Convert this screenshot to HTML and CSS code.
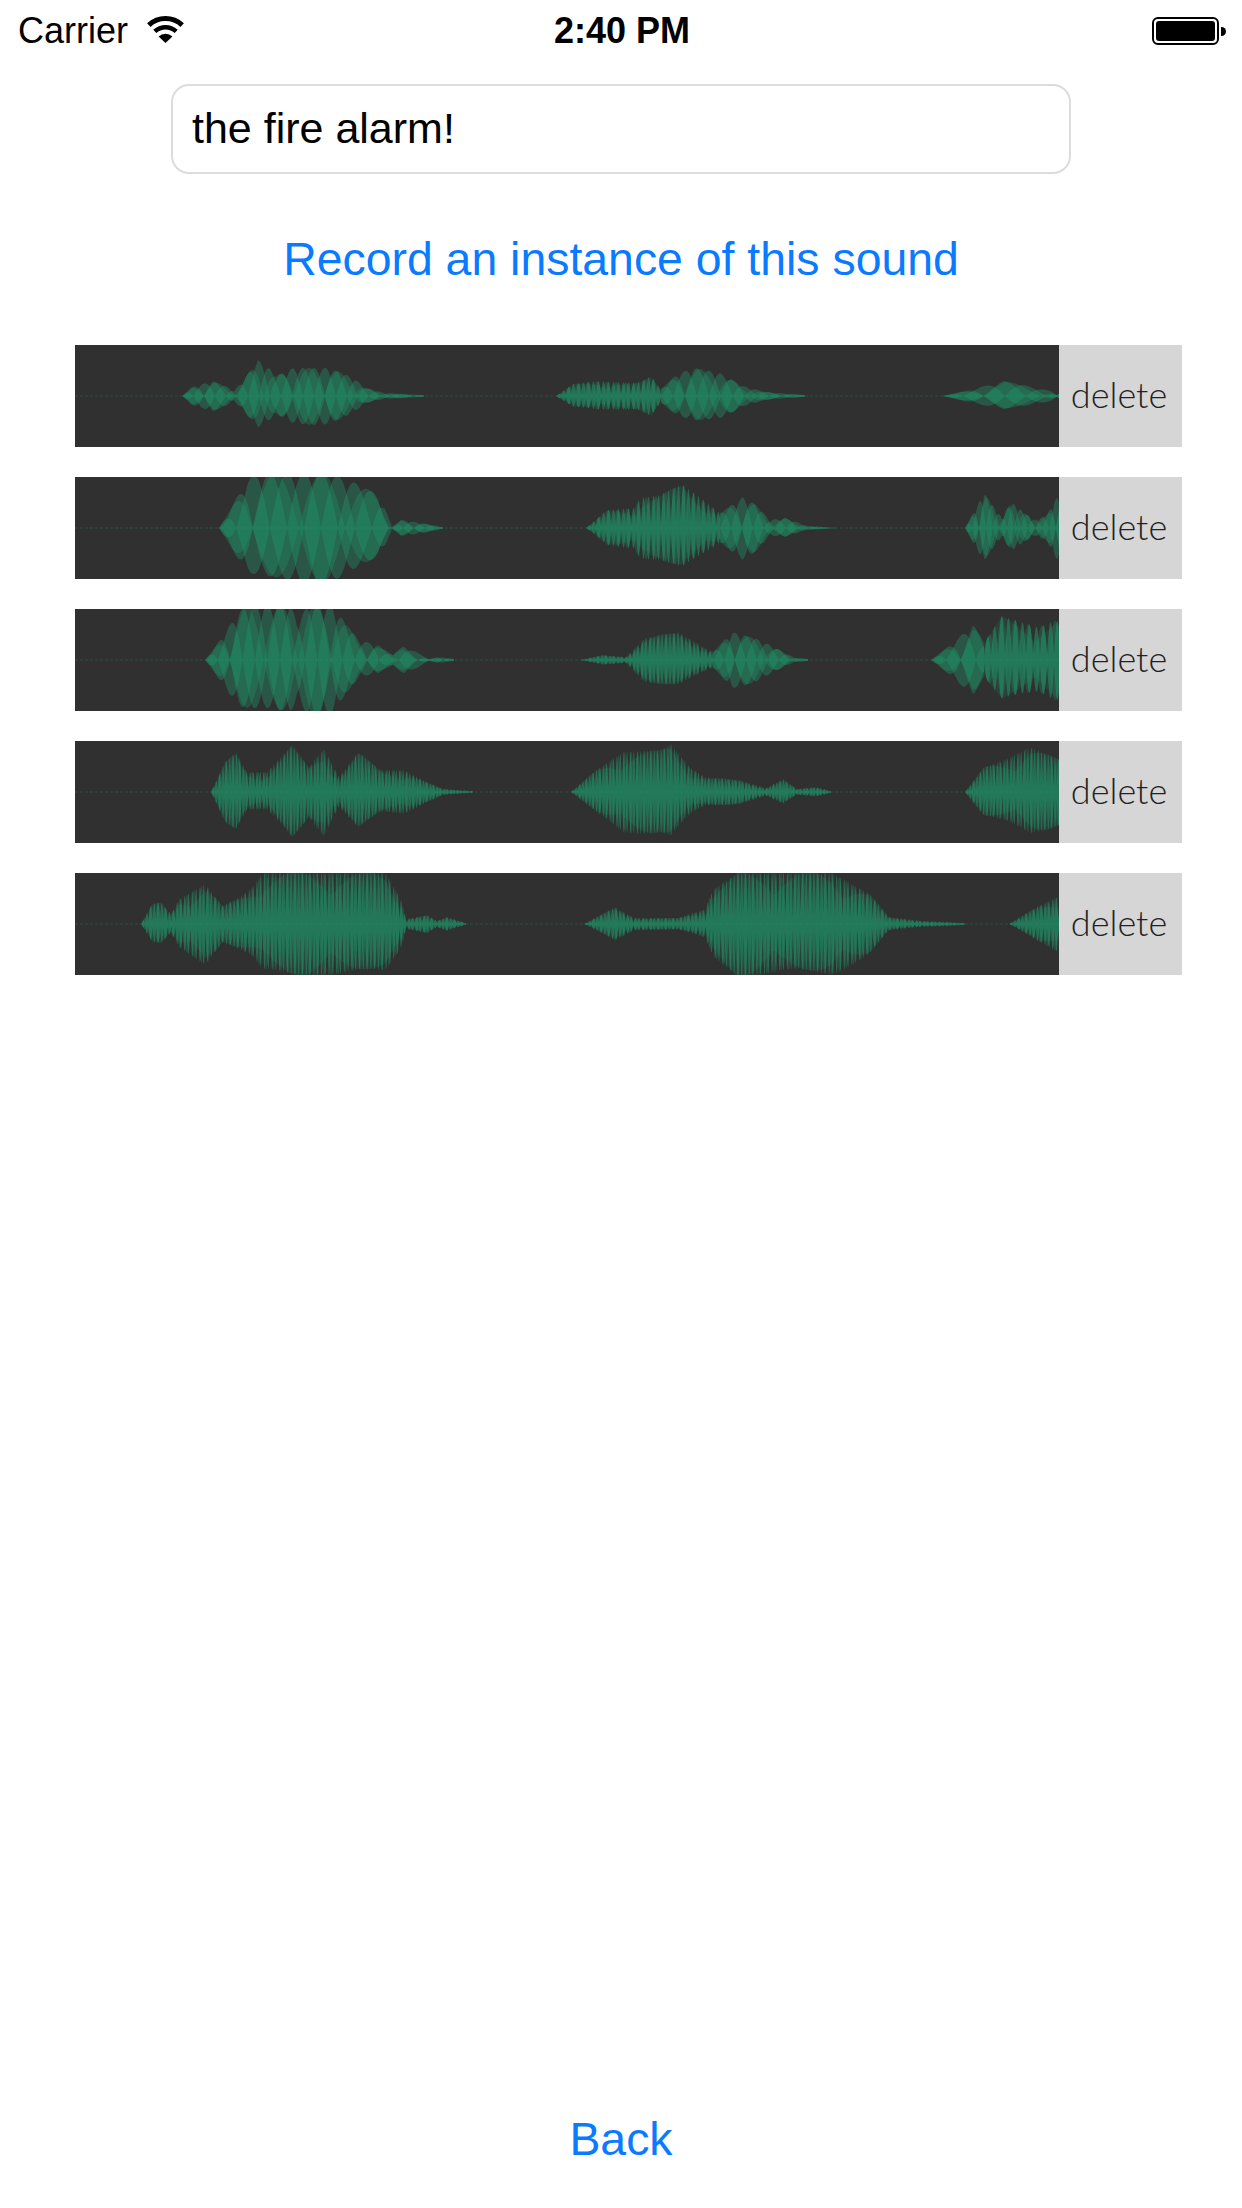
FILE: index.html
```html
<!DOCTYPE html>
<html lang="en">
<head>
    <meta charset="UTF-8">
    <meta name="viewport" content="width=device-width, initial-scale=1.0">
    <title>Sound detail</title>
    <link rel="stylesheet" href="styles.css">
</head>
<body>
    <div class="status-bar">
        <div class="status-left">
            <span>Carrier</span>
            <svg class="wifi" width="40" height="30" viewBox="0 0 40 30">
                <path d="M2.8 10.1A24.5 24.5 0 0 1 36.2 10.1" fill="none" stroke="#000" stroke-width="5"/>
                <path d="M8.8 16.3A16 16 0 0 1 30.2 16.3" fill="none" stroke="#000" stroke-width="4.5"/>
                <path d="M19.5 28L12.6 21.4A10 10 0 0 1 26.4 21.4Z" fill="#000"/>
            </svg>
        </div>
        <div class="status-time">2:40 PM</div>
        <div class="status-right">
            <div class="battery"><div class="battery-fill"></div></div>
            <div class="battery-nub"></div>
        </div>
    </div>

    <div class="name-field">the fire alarm!</div>

    <a class="link record-link">Record an instance of this sound</a>

    <div class="recordings">
        <div class="recording">
            <svg class="wave" data-wave="0" width="984" height="102"></svg>
            <div class="delete">delete</div>
        </div>
        <div class="recording">
            <svg class="wave" data-wave="1" width="984" height="102"></svg>
            <div class="delete">delete</div>
        </div>
        <div class="recording">
            <svg class="wave" data-wave="2" width="984" height="102"></svg>
            <div class="delete">delete</div>
        </div>
        <div class="recording">
            <svg class="wave" data-wave="3" width="984" height="102"></svg>
            <div class="delete">delete</div>
        </div>
        <div class="recording">
            <svg class="wave" data-wave="4" width="984" height="102"></svg>
            <div class="delete">delete</div>
        </div>
    </div>

    <a class="link back-link">Back</a>

    <script src="wave.js"></script>
</body>
</html>
```

FILE: styles.css
```css
html, body {
    height: 100%;
}
body {
    font-family: "Liberation Sans", Arial, sans-serif;
    display: flex;
    flex-direction: column;
    align-items: center;
    height: 2208px;
    margin: 0;
    background: #fff;
    color: #000;
    overflow: hidden;
}
.status-bar {
    display: grid;
    grid-template-columns: 1fr auto 1fr;
    align-items: center;
    width: 100%;
    box-sizing: border-box;
    height: 60px;
    padding: 2px 16px 0 18px;
    font-size: 36px;
}
.status-left {
    display: flex;
    align-items: center;
    gap: 18px;
}
.wifi {
    margin-top: -2px;
}
.status-time {
    font-weight: bold;
}
.status-right {
    display: flex;
    align-items: center;
    justify-content: flex-end;
    gap: 2px;
}
.battery {
    width: 67px;
    height: 28px;
    box-sizing: border-box;
    border: 2px solid #000;
    border-radius: 6px;
    padding: 2px;
}
.battery-fill {
    height: 100%;
    background: #000;
    border-radius: 3px;
}
.battery-nub {
    width: 5px;
    height: 9px;
    background: #000;
    border-radius: 0 5px 5px 0;
}
.name-field {
    width: 900px;
    height: 90px;
    box-sizing: border-box;
    margin-top: 24px;
    padding: 0 19px 2px;
    border: 2px solid #dcdcdc;
    border-radius: 18px;
    display: flex;
    align-items: center;
    font-size: 43px;
}
.link {
    color: #0a7aff;
    font-size: 46.4px;
}
.record-link {
    margin-top: 58px;
}
.recordings {
    display: flex;
    flex-direction: column;
    align-self: flex-start;
    gap: 30px;
    margin: 59px 0 0 75px;
}
.recording {
    display: flex;
    width: 1107px;
    height: 102px;
}
.wave {
    display: block;
    flex: none;
    background: #303030;
}
.delete {
    flex: 1;
    display: flex;
    align-items: center;
    justify-content: center;
    padding: 0 3px 4px 0;
    background: #d6d6d6;
    color: #222;
    font-family: Lato, "Liberation Sans", sans-serif;
    font-weight: 300;
    font-size: 36px;
}
.back-link {
    margin-top: auto;
    margin-bottom: 42px;
}
```

FILE: wave.js
```js
// envelope of each burst: [lobe period, [[x, amplitude], ...]]
var WAVES = [
    [
        [22, [[107, 0], [117, 9], [138, 15], [153, 9], [159, 5], [169, 17], [183, 36], [194, 28], [201, 20], [218, 28], [253, 28], [268, 23], [280, 17], [291, 8], [310, 3], [349, 1]]],
        [5, [[481, 0], [498, 12], [521, 15], [559, 13], [565, 14], [576, 20], [586, 7]]],
        [24, [[586, 7], [603, 23], [620, 28], [645, 23], [668, 10], [691, 4], [730, 1]]],
        [42, [[867, 0], [890, 5], [909, 10], [929, 15], [963, 8], [976, 5], [982, 1], [984, 3]]]
    ],
    [
        [34, [[144, 0], [153, 14], [163, 33], [173, 50], [184, 55], [253, 55], [270, 50], [291, 40], [303, 33], [310, 20], [317, 1]]],
        [22, [[317, 1], [326, 8], [341, 6], [368, 1]]],
        [5, [[511, 0], [532, 18], [559, 20], [565, 30], [584, 33], [607, 44], [626, 30], [645, 15]]],
        [22, [[645, 15], [668, 31], [680, 24], [695, 8], [710, 10], [733, 2], [764, 0]]],
        [14, [[890, 0], [909, 35], [927, 10], [936, 26], [959, 8], [971, 12], [982, 31], [984, 32]]]
    ],
    [
        [25, [[130, 0], [138, 10], [150, 28], [165, 50], [176, 55], [215, 55], [222, 40], [234, 55], [257, 55], [272, 35], [284, 20], [303, 15]]],
        [40, [[303, 15], [318, 5], [329, 15], [354, 1]]],
        [14, [[354, 1], [364, 3], [379, 1]]],
        [4, [[505, 0], [528, 5], [551, 3], [570, 22], [584, 25], [603, 28], [630, 12], [638, 8]]],
        [22, [[638, 8], [657, 28], [680, 22], [695, 15], [718, 3], [733, 1]]],
        [30, [[856, 0], [879, 18], [898, 36], [909, 18]]],
        [7, [[909, 18], [927, 44], [963, 33], [982, 40], [984, 36]]]
    ],
    [
        [3.4, [[136, 0], [150, 30], [161, 40], [172, 20], [192, 20], [217, 47], [234, 25], [249, 44], [264, 15], [283, 40], [306, 22], [329, 22], [352, 10], [368, 3], [398, 1]]],
        [3.4, [[496, 0], [521, 22], [548, 40], [585, 42], [596, 48], [615, 25], [630, 15], [664, 12], [691, 4], [708, 13], [722, 3], [741, 5], [756, 1]]],
        [3.4, [[890, 0], [909, 25], [929, 32], [955, 45], [984, 33]]]
    ],
    [
        [3.8, [[66, 0], [77, 20], [86, 22], [96, 10], [104, 25], [130, 40], [148, 18], [161, 25], [176, 35], [188, 52], [310, 52], [326, 25], [331, 5], [352, 9], [362, 3], [372, 7], [391, 1]]],
        [3.8, [[509, 0], [540, 17], [559, 6], [603, 6], [630, 15], [638, 35], [664, 52], [756, 52], [795, 30], [814, 7], [848, 3], [890, 1]]],
        [3.8, [[934, 0], [963, 18], [984, 28]]]
    ]
];
var SVG_NS = "http://www.w3.org/2000/svg";
var MID = 51;

function envelope(points, x) {
    for (var i = 1; i < points.length; i++) {
        if (x <= points[i][0]) {
            var a = points[i - 1];
            var b = points[i];
            return a[1] + (b[1] - a[1]) * (x - a[0]) / (b[0] - a[0]);
        }
    }
    return 0;
}

function layerPath(points, period, phase, floor) {
    var start = points[0][0];
    var end = points[points.length - 1][0];
    var step = period < 10 ? 0.25 : 0.5;
    var top = [];
    var bottom = [];
    for (var x = start; x <= end; x += step) {
        var wobble = Math.abs(Math.sin(Math.PI * (x - start) / period + phase));
        var amp = envelope(points, x) * (floor + (1 - floor) * wobble);
        var low = amp * (0.95 + 0.08 * Math.sin(x / 17));
        top.push(x.toFixed(2) + " " + (MID - amp).toFixed(2));
        bottom.unshift(x.toFixed(2) + " " + (MID + low).toFixed(2));
    }
    return "M" + top.join("L") + "L" + bottom.join("L") + "Z";
}

function addPath(svg, d, opacity) {
    var path = document.createElementNS(SVG_NS, "path");
    path.setAttribute("d", d);
    path.setAttribute("fill", "rgb(30, 155, 110)");
    path.setAttribute("fill-opacity", opacity);
    svg.appendChild(path);
}

document.querySelectorAll(".wave").forEach(function (svg) {
    var line = document.createElementNS(SVG_NS, "path");
    line.setAttribute("d", "M0 " + MID + "H984");
    line.setAttribute("stroke", "rgb(30, 155, 110)");
    line.setAttribute("stroke-opacity", "0.3");
    line.setAttribute("stroke-dasharray", "3 2");
    svg.appendChild(line);

    WAVES[svg.getAttribute("data-wave")].forEach(function (burst) {
        var points = burst[1];
        var period = burst[0];
        if (period < 10) {
            // fine ripple: teeth over a soft body
            addPath(svg, layerPath(points, period, 0, 0.15), 0.5);
            addPath(svg, layerPath(points, period * 1.9, 0.5, 0.1), 0.25);
            addPath(svg, layerPath(points, 70, 0.9, 0.55), 0.14);
        } else {
            addPath(svg, layerPath(points, period, 0, 0), 0.36);
            addPath(svg, layerPath(points, period, Math.PI / 2, 0), 0.36);
            addPath(svg, layerPath(points, period * 1.37, 0.9, 0), 0.3);
        }
    });
});
```
